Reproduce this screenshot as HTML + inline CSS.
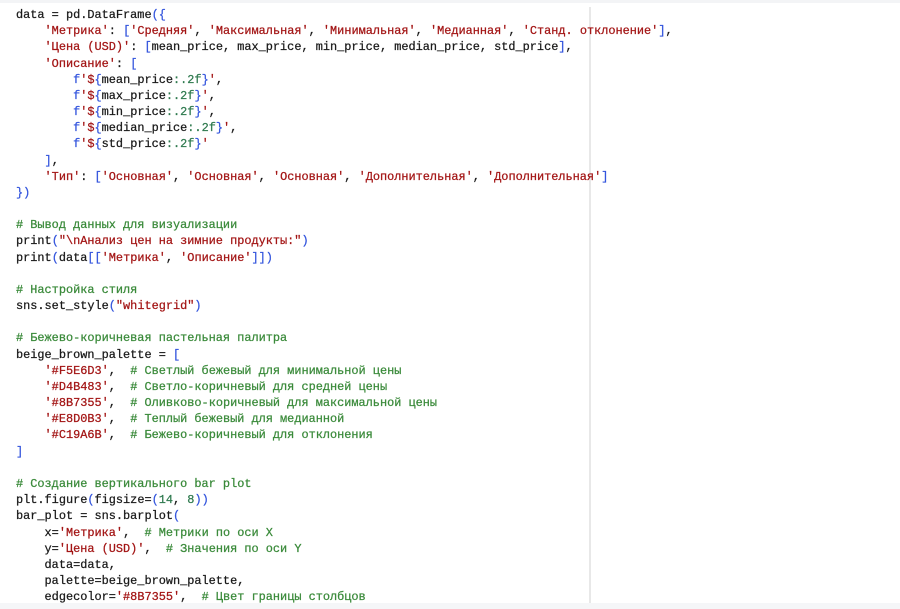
<!DOCTYPE html>
<html><head><meta charset="utf-8"><style>
html,body{margin:0;padding:0;background:#fff;width:900px;height:609px;overflow:hidden}
.top{position:absolute;left:0;top:0;width:900px;height:3px;background:#f3f4f6}
.bot{position:absolute;left:0;bottom:0;width:900px;height:6px;background:#f5f6f8}
.vl{position:absolute;left:589px;top:7px;width:2px;height:596px;background:#e8e8e8}
pre{position:absolute;left:16px;top:7px;margin:0;font-family:"Liberation Mono","DejaVu Sans Mono",monospace;font-size:11.9px;line-height:16.17px;color:#1a1a1a;-webkit-text-stroke:0.25px currentColor}
.s{color:#a31515}.c{color:#3a8a3a}.b{color:#3355dd}.n{color:#2f7a4f}
</style></head><body>
<div class="top"></div><div class="vl"></div><div class="bot"></div>
<pre>data = pd.DataFrame<span class="b">({</span>
    <span class="s">'Метрика'</span>: <span class="b">[</span><span class="s">'Средняя'</span>, <span class="s">'Максимальная'</span>, <span class="s">'Минимальная'</span>, <span class="s">'Медианная'</span>, <span class="s">'Станд. отклонение'</span><span class="b">]</span>,
    <span class="s">'Цена (USD)'</span>: <span class="b">[</span>mean_price, max_price, min_price, median_price, std_price<span class="b">]</span>,
    <span class="s">'Описание'</span>: <span class="b">[</span>
        <span class="b">f</span><span class="s">'$</span><span class="b">{</span>mean_price<span class="n">:.2f</span><span class="b">}</span><span class="s">'</span>,
        <span class="b">f</span><span class="s">'$</span><span class="b">{</span>max_price<span class="n">:.2f</span><span class="b">}</span><span class="s">'</span>,
        <span class="b">f</span><span class="s">'$</span><span class="b">{</span>min_price<span class="n">:.2f</span><span class="b">}</span><span class="s">'</span>,
        <span class="b">f</span><span class="s">'$</span><span class="b">{</span>median_price<span class="n">:.2f</span><span class="b">}</span><span class="s">'</span>,
        <span class="b">f</span><span class="s">'$</span><span class="b">{</span>std_price<span class="n">:.2f</span><span class="b">}</span><span class="s">'</span>
    <span class="b">]</span>,
    <span class="s">'Тип'</span>: <span class="b">[</span><span class="s">'Основная'</span>, <span class="s">'Основная'</span>, <span class="s">'Основная'</span>, <span class="s">'Дополнительная'</span>, <span class="s">'Дополнительная'</span><span class="b">]</span>
<span class="b">})</span>

<span class="c"># Вывод данных для визуализации</span>
print<span class="b">(</span><span class="s">"\nАнализ цен на зимние продукты:"</span><span class="b">)</span>
print<span class="b">(</span>data<span class="b">[[</span><span class="s">'Метрика'</span>, <span class="s">'Описание'</span><span class="b">]])</span>

<span class="c"># Настройка стиля</span>
sns.set_style<span class="b">(</span><span class="s">"whitegrid"</span><span class="b">)</span>

<span class="c"># Бежево-коричневая пастельная палитра</span>
beige_brown_palette = <span class="b">[</span>
    <span class="s">'#F5E6D3'</span>,  <span class="c"># Светлый бежевый для минимальной цены</span>
    <span class="s">'#D4B483'</span>,  <span class="c"># Светло-коричневый для средней цены</span>
    <span class="s">'#8B7355'</span>,  <span class="c"># Оливково-коричневый для максимальной цены</span>
    <span class="s">'#E8D0B3'</span>,  <span class="c"># Теплый бежевый для медианной</span>
    <span class="s">'#C19A6B'</span>,  <span class="c"># Бежево-коричневый для отклонения</span>
<span class="b">]</span>

<span class="c"># Создание вертикального bar plot</span>
plt.figure<span class="b">(</span>figsize=<span class="b">(</span><span class="n">14</span>, <span class="n">8</span><span class="b">))</span>
bar_plot = sns.barplot<span class="b">(</span>
    x=<span class="s">'Метрика'</span>,  <span class="c"># Метрики по оси X</span>
    y=<span class="s">'Цена (USD)'</span>,  <span class="c"># Значения по оси Y</span>
    data=data,
    palette=beige_brown_palette,
    edgecolor=<span class="s">'#8B7355'</span>,  <span class="c"># Цвет границы столбцов</span>
</pre>
</body></html>
